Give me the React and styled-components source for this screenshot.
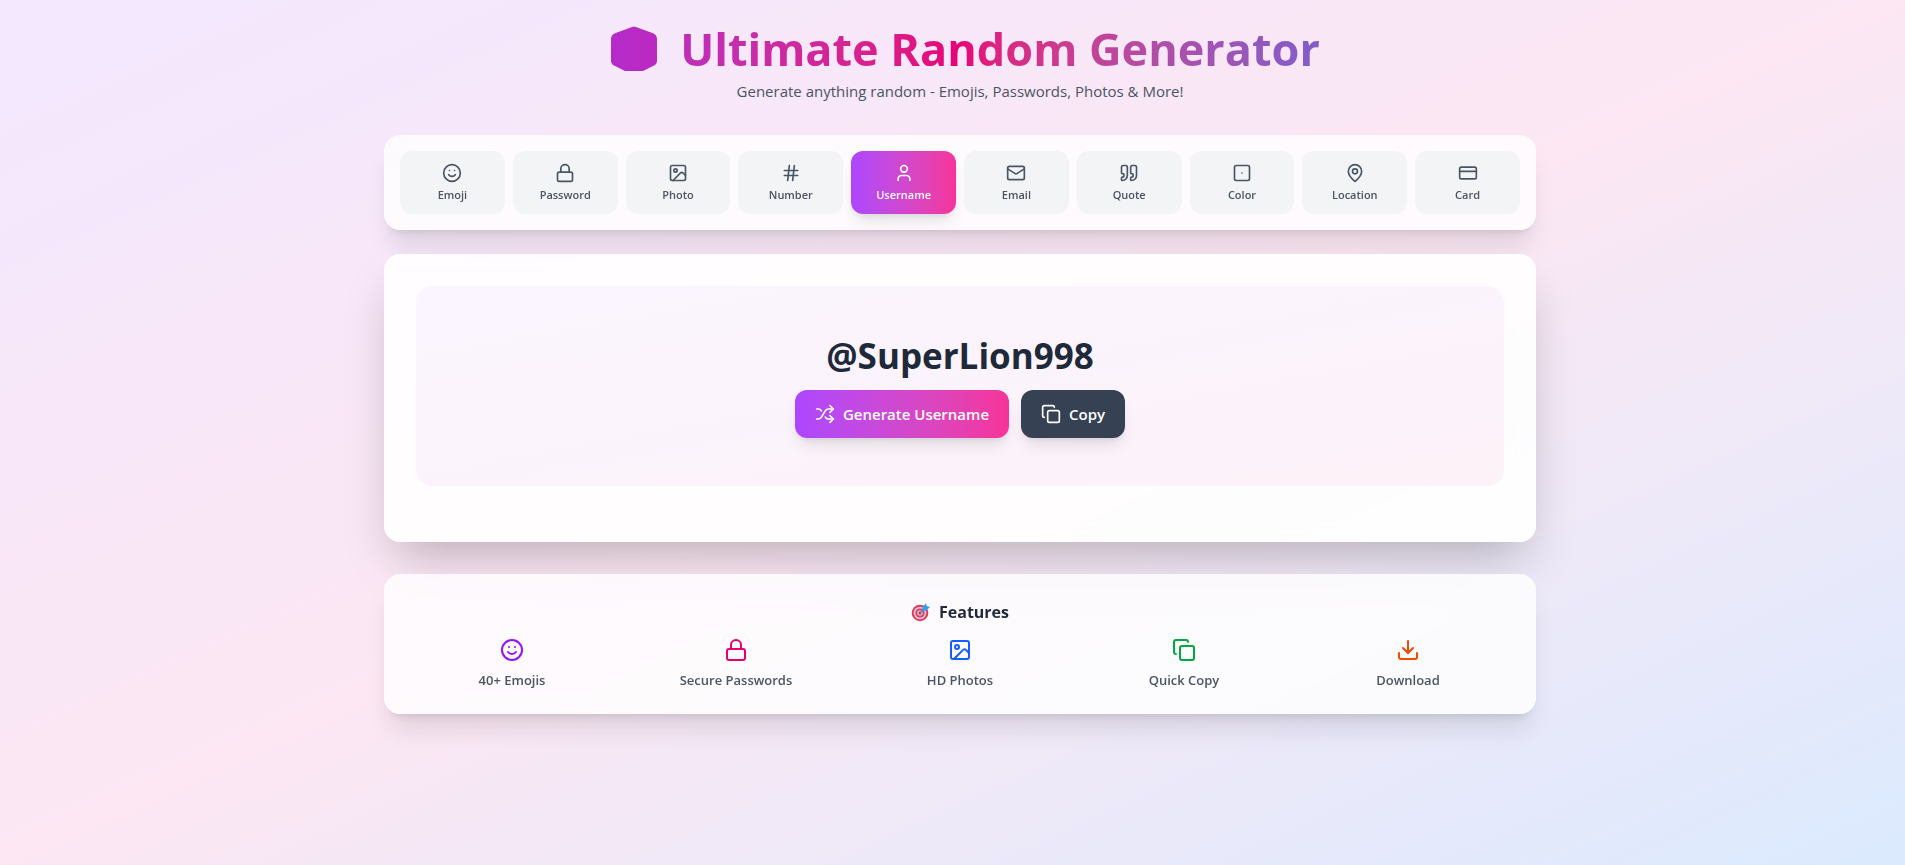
import React, { useState } from "react";
import styled, { createGlobalStyle, css } from "styled-components";
import {
  Smile, Lock, Image, Hash, User, Mail, Quote, Dice1, MapPin, CreditCard,
  Shuffle, Copy, Download,
} from "lucide-react";

const GlobalStyle = createGlobalStyle`
  *, *::before, *::after { box-sizing: border-box; }
  body {
    margin: 0;
    font-family: "Segoe UI", "Open Sans", "Noto Sans", sans-serif;
    color: #1e2939;
  }
  h1, h2, p, ul { margin: 0; padding: 0; }
`;

const Page = styled.div`
  min-height: 100vh;
  padding: 23px 16px 23px 31px;
  background: linear-gradient(to bottom right in oklab, #f3e8ff, #fce7f3, #dbeafe);
`;

const Container = styled.main`
  max-width: 1152px;
  margin: 0 auto;
`;

const Header = styled.header`
  margin-bottom: 32px;
  text-align: center;
`;

const Title = styled.h1`
  display: flex;
  justify-content: center;
  align-items: center;
  gap: 22px;
  margin-bottom: 4px;
  padding-left: 10px;
  font-size: 45px;
  line-height: 52px;
  font-weight: 700;
  color: transparent;
  background: linear-gradient(to right in oklab, #9810fa, #e60076, #155dfc);
  background-clip: text;
  -webkit-background-clip: text;
`;

const Subtitle = styled.p`
  font-size: 15px;
  line-height: 24px;
  color: #4a5565;
`;

const Card = styled.section`
  border-radius: 16px;
  background: rgba(255, 255, 255, 0.8);
  backdrop-filter: blur(8px);
  box-shadow: 0 20px 25px -5px rgba(0, 0, 0, 0.1), 0 8px 10px -6px rgba(0, 0, 0, 0.1);
`;

const TabBar = styled(Card).attrs({ as: "nav" })`
  display: grid;
  grid-template-columns: repeat(10, 1fr);
  gap: 8px;
  margin-bottom: 24px;
  padding: 16px;
`;

const primary = css`
  color: #fff;
  background: linear-gradient(to right in oklab, #ad46ff, #f6339a);
`;

const raised = css`
  box-shadow: 0 10px 15px -3px rgba(0, 0, 0, 0.1), 0 4px 6px -4px rgba(0, 0, 0, 0.1);
`;

const Tab = styled.button`
  display: flex;
  flex-direction: column;
  align-items: center;
  gap: 4px;
  padding: 12px 12px 11px;
  border: 0;
  border-radius: 12px;
  font-family: inherit;
  font-size: 11px;
  line-height: 16px;
  font-weight: 600;
  cursor: pointer;
  color: #4a5565;
  background: #f3f4f6;
  ${(p) => p.$active && css`${primary} ${raised}`}
`;

const Generator = styled(Card)`
  margin-bottom: 32px;
  padding: 32px 32px 56px;
  background: rgba(255, 255, 255, 0.9);
  box-shadow: 0 25px 50px -12px rgba(0, 0, 0, 0.25);
`;

const Result = styled.div`
  display: flex;
  flex-direction: column;
  align-items: center;
  gap: 12px;
  padding: 48px;
  border-radius: 16px;
  background: linear-gradient(to bottom right in oklab, #faf5ff, #fdf2f8);
`;

const Username = styled.p`
  font-size: 35px;
  line-height: 44px;
  font-weight: 700;
`;

const Actions = styled.div`
  display: flex;
  gap: 12px;
`;

const Button = styled.button`
  display: flex;
  align-items: center;
  gap: 8px;
  padding: 12px 20px;
  border: 0;
  border-radius: 12px;
  font-family: inherit;
  font-size: 15px;
  line-height: 24px;
  font-weight: 600;
  cursor: pointer;
  color: #fff;
  background: #364153;
  ${raised}
  ${(p) => p.$primary && primary}
`;

const Features = styled(Card)`
  padding: 24px;
`;

const FeaturesTitle = styled.h2`
  display: flex;
  justify-content: center;
  align-items: center;
  gap: 8px;
  margin-bottom: 12px;
  font-size: 16px;
  line-height: 28px;
  font-weight: 700;
`;

const FeatureList = styled.ul`
  display: grid;
  grid-template-columns: repeat(5, 1fr);
  gap: 16px;
  list-style: none;
`;

const Feature = styled.li`
  display: flex;
  flex-direction: column;
  align-items: center;
  gap: 8px;
  font-size: 13px;
  line-height: 20px;
  font-weight: 600;
  color: #4a5565;
  svg { color: ${(p) => p.$tint}; }
`;

const DieIcon = () => (
  <svg width="48" height="48" viewBox="0 0 48 48" aria-hidden="true">
    <defs>
      <linearGradient id="die" x1="0" x2="1" y1="0" y2="0">
        <stop offset="0" stopColor="#b42ccb" />
        <stop offset="1" stopColor="#bb29bf" />
      </linearGradient>
    </defs>
    <path
      fill="url(#die)"
      d="M22 2.1Q24 .9 26 2.1L43 8.2Q47 10 47 14V35.5Q47 39.2 44 40.6L33 46H15L4 40.6Q1 39.2 1 35.5V14Q1 10 5 8.2Z"
    />
  </svg>
);

const TargetIcon = () => (
  <svg width="20" height="20" viewBox="0 0 20 20" aria-hidden="true">
    <circle cx="9" cy="11" r="8.3" fill="#e03a5c" />
    <circle cx="9" cy="11" r="6.3" fill="#dcc3d8" />
    <circle cx="9" cy="11" r="4.6" fill="#e03a5c" />
    <circle cx="9" cy="11" r="2.8" fill="#dcc3d8" />
    <circle cx="9" cy="11" r="1.5" fill="#c0305a" />
    <path d="M9 11L14 6" stroke="#5b86a5" strokeWidth="1.4" />
    <path d="M11.5 8.8V5.2L15 1.2L15.8 3.9L19 5L15.2 8.8Z" fill="#2f9fee" />
  </svg>
);

const tabs = [
  ["Emoji", Smile], ["Password", Lock], ["Photo", Image], ["Number", Hash],
  ["Username", User], ["Email", Mail], ["Quote", Quote], ["Color", Dice1],
  ["Location", MapPin], ["Card", CreditCard],
];

const features = [
  ["40+ Emojis", Smile, "#9810fa"],
  ["Secure Passwords", Lock, "#e60076"],
  ["HD Photos", Image, "#155dfc"],
  ["Quick Copy", Copy, "#00a63e"],
  ["Download", Download, "#f54900"],
];

const adjectives = ["Super", "Happy", "Cosmic", "Swift"];
const animals = ["Lion", "Tiger", "Panda", "Eagle"];
const pick = (list) => list[Math.floor(Math.random() * list.length)];

export default function App() {
  const [active, setActive] = useState("Username");
  const [username, setUsername] = useState("@SuperLion998");
  const generate = () =>
    setUsername(`@${pick(adjectives)}${pick(animals)}${Math.floor(Math.random() * 1000)}`);

  return (
    <Page>
      <GlobalStyle />
      <Container>
        <Header>
          <Title><DieIcon /><span>Ultimate Random Generator</span></Title>
          <Subtitle>Generate anything random - Emojis, Passwords, Photos &amp; More!</Subtitle>
        </Header>
        <TabBar>
          {tabs.map(([label, Icon]) => (
            <Tab key={label} $active={label === active} onClick={() => setActive(label)}>
              <Icon size={20} />
              <span>{label}</span>
            </Tab>
          ))}
        </TabBar>
        <Generator>
          <Result>
            <Username>{username}</Username>
            <Actions>
              <Button $primary onClick={generate}><Shuffle size={20} />Generate Username</Button>
              <Button onClick={() => navigator.clipboard?.writeText(username)}><Copy size={20} />Copy</Button>
            </Actions>
          </Result>
        </Generator>
        <Features>
          <FeaturesTitle><TargetIcon />Features</FeaturesTitle>
          <FeatureList>
            {features.map(([label, Icon, tint]) => (
              <Feature key={label} $tint={tint}>
                <Icon size={24} />
                {label}
              </Feature>
            ))}
          </FeatureList>
        </Features>
      </Container>
    </Page>
  );
}
